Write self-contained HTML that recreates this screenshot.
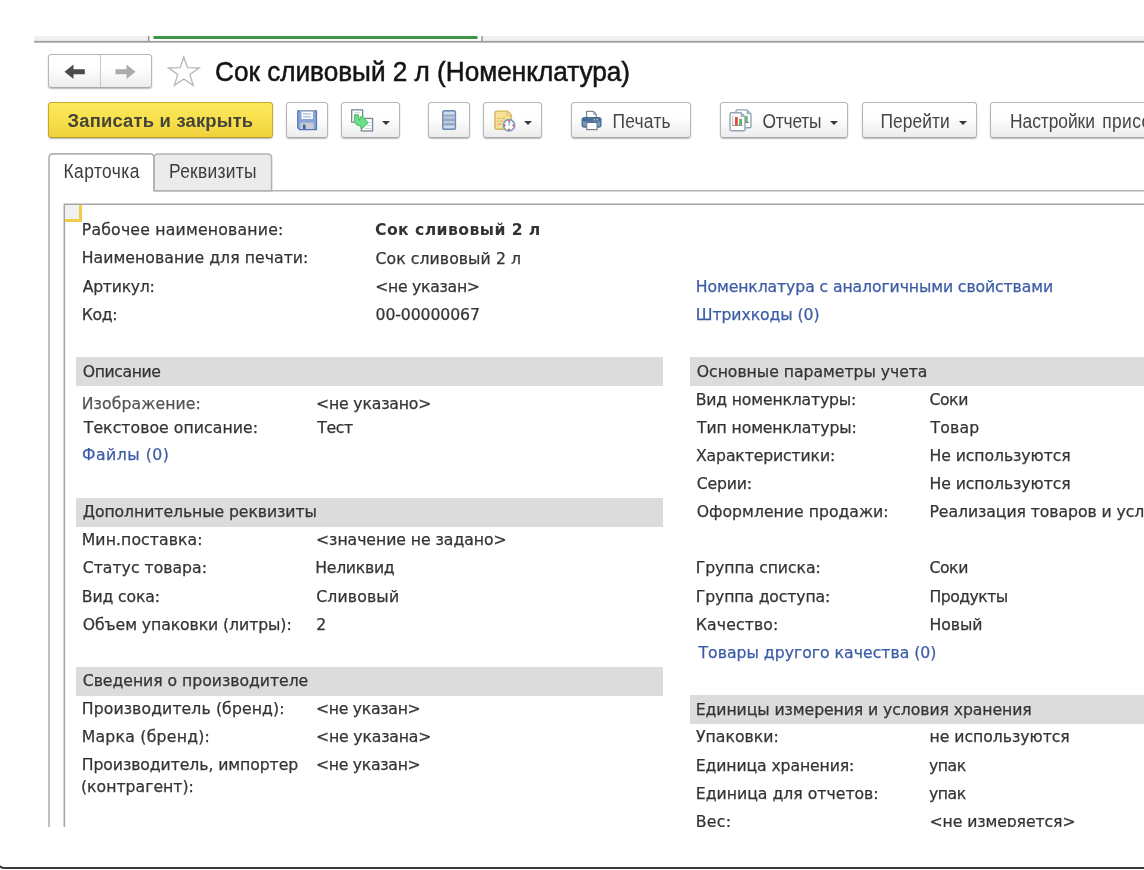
<!DOCTYPE html>
<html lang="ru"><head><meta charset="utf-8"><title>Сок сливовый 2 л (Номенклатура)</title>
<style>
html,body{margin:0;padding:0;background:#fff;}
body{width:1144px;height:870px;position:relative;overflow:hidden;font-family:"Liberation Sans",sans-serif;}
.a{position:absolute;}
.t{position:absolute;white-space:nowrap;font-family:"DejaVu Sans", "Liberation Sans", sans-serif;font-size:15.7px;line-height:20px;height:20px;color:#343434;-webkit-text-stroke:0.25px currentColor;}
.t.b{font-weight:bold;color:#333;-webkit-text-stroke:0;}
.t.l{color:#3c5ca6;}
.t.g{color:#555;}
.band{position:absolute;background:#dcdcdc;}
.u{position:absolute;white-space:nowrap;font-family:"Liberation Sans",sans-serif;}
.btn{position:absolute;box-sizing:border-box;border:1px solid #b6b6b6;border-bottom-color:#a9a9a9;border-radius:3.5px;background:linear-gradient(#ffffff 0%,#ffffff 42%,#ececec 100%);box-shadow:0 1px 1.5px rgba(0,0,0,0.28);font-size:17.5px;color:#444;white-space:nowrap;}
.btn span.lbl{position:absolute;top:0;line-height:34px;}
.caret{position:absolute;width:0;height:0;border-left:4px solid transparent;border-right:4px solid transparent;border-top:4px solid #3a3a3a;}
#clip{position:absolute;left:0;top:0;width:1200px;height:827px;overflow:hidden;filter:blur(0.45px);}
</style></head><body>
<div id="clip">
<svg class="a" style="left:0;top:0;" width="1160" height="870" viewBox="0 0 1160 870">
<rect x="34" y="36" width="1126" height="5.6" fill="#f0f0f0"/>
<rect x="148.7" y="36" width="333.3" height="5.6" fill="#ffffff"/>
<rect x="34" y="40.9" width="1126" height="1.8" fill="#a0a0a0"/>
<rect x="148" y="36" width="1.4" height="5.5" fill="#8e8e8e"/>
<rect x="481.3" y="36" width="1.4" height="5.5" fill="#8e8e8e"/>
<rect x="153.5" y="36" width="324" height="3" fill="#3f9447"/>
<path d="M154 190.8 L154 157.9 Q154 153.9 158 153.9 L267.6 153.9 Q271.6 153.9 271.6 157.9 L271.6 190.8 Z" fill="#ebebeb" stroke="#b2b2b2" stroke-width="1.5"/>
<path d="M154 190.8 L1160 190.8" fill="none" stroke="#b2b2b2" stroke-width="1.5"/>
<path d="M49 900 L49 157.9 Q49 153.9 53 153.9 L150 153.9 Q154 153.9 154 157.9 L154 190.8" fill="none" stroke="#b2b2b2" stroke-width="1.6"/>
<path d="M64.35 900 L64.35 204.2 L1160 204.2" fill="none" stroke="#a4a4a4" stroke-width="1.6"/>
</svg>
<div class="btn" style="left:48px;top:54px;width:104px;height:34px;"></div>
<div class="a" style="left:100px;top:55px;width:1px;height:32px;background:#c8c8c8;"></div>
<svg class="a" style="left:60px;top:60px;" width="84" height="24" viewBox="0 0 84 24">
<path d="M4.5 11.7 L13.5 4.4 L13.5 9.2 L24.8 9.2 L24.8 14.2 L13.5 14.2 L13.5 19 Z" fill="#4a4a4a"/>
<path d="M75.5 11.7 L66.5 4.4 L66.5 9.2 L55.5 9.2 L55.5 14.2 L66.5 14.2 L66.5 19 Z" fill="#ababab"/>
</svg>
<svg class="a" style="left:165px;top:54px;" width="38" height="36" viewBox="0 0 38 36">
<path d="M18.8 3 L22.5 13.6 L34.2 13.8 L24.9 20.6 L28.2 31.4 L18.8 25 L9.4 31.4 L12.7 20.6 L3.4 13.8 L15.1 13.6 Z" fill="#fff" stroke="#b5b5b5" stroke-width="1.3" stroke-linejoin="miter"/>
</svg>
<div class="btn" style="left:48px;top:102px;width:225px;height:36px;border-color:#c6aa2c;border-bottom-color:#b39a2a;background:linear-gradient(#fbe85b 0%,#f8e04c 50%,#efd23c 100%);"></div>
<div class="btn" style="left:286px;top:102px;width:42px;height:36px;"></div>
<div class="btn" style="left:341px;top:102px;width:59px;height:36px;"></div>
<div class="caret" style="left:381.7px;top:120.5px;"></div>
<div class="btn" style="left:428px;top:102px;width:42px;height:36px;"></div>
<div class="btn" style="left:483px;top:102px;width:59px;height:36px;"></div>
<div class="caret" style="left:524px;top:120.5px;"></div>
<div class="btn" style="left:571px;top:102px;width:120px;height:36px;"></div>
<div class="btn" style="left:720px;top:102px;width:128px;height:36px;"></div>
<div class="caret" style="left:830.3px;top:120.5px;"></div>
<div class="btn" style="left:862px;top:102px;width:115px;height:36px;"></div>
<div class="caret" style="left:959px;top:120.5px;"></div>
<div class="btn" style="left:990px;top:102px;width:200px;height:36px;"></div>
<svg class="a" style="left:297px;top:110px;" width="21" height="21" viewBox="0 0 21 21">
<path d="M0.7 1.4 Q0.7 0.6 1.5 0.6 L18.7 0.6 Q19.5 0.6 19.5 1.4 L19.5 19.6 L2.6 19.6 L0.7 17.8 Z" fill="#88a4db" stroke="#5775b7" stroke-width="1.2"/>
<rect x="2.2" y="0.2" width="15.8" height="1.1" fill="#a4adbd"/>
<rect x="4.5" y="1.6" width="11.4" height="7.4" fill="#fdfdfe"/>
<rect x="6" y="3.1" width="8.2" height="1.6" fill="#b8c8dd"/>
<rect x="6" y="6" width="8.2" height="1.6" fill="#b8c8dd"/>
<rect x="3.3" y="12.7" width="13.2" height="6.3" fill="#c8ccd1"/>
<rect x="6" y="14.6" width="2.5" height="4.4" fill="#3f5ca2"/>
</svg>
<svg class="a" style="left:349px;top:108px;" width="27" height="26" viewBox="0 0 27 26">
<rect x="2.65" y="1.85" width="11" height="12.3" fill="#fbfcfd" stroke="#7b8699" stroke-width="1.3"/>
<rect x="5" y="4.3" width="6" height="0.9" fill="#c9ced6"/>
<rect x="12.35" y="10.45" width="11.2" height="12.5" fill="#fbfcfd" stroke="#7b8699" stroke-width="1.3"/>
<rect x="18" y="14.3" width="4" height="0.9" fill="#c9ced6"/><rect x="18" y="17.2" width="4" height="0.9" fill="#c9ced6"/><rect x="16" y="20.1" width="6" height="0.9" fill="#c9ced6"/>
<path d="M5.65 6.85 L9.5 6.85 L10.25 12.55 L12.1 8.3 L13.4 8.1 L19.1 14.75 L12.65 21 L11.7 18.1 L8 17 L5.65 14.4 Z" fill="#6be08c" stroke="#4bb35c" stroke-width="1" stroke-linejoin="round"/>
</svg>
<svg class="a" style="left:442px;top:110.3px;" width="15" height="20" viewBox="0 0 15 20">
<rect x="0.6" y="0.6" width="13" height="18.8" rx="2" fill="#93a9c9" stroke="#7087b4" stroke-width="1.1"/>
<rect x="1.7" y="1.8" width="10.8" height="2.8" fill="#cedcea"/>
<rect x="1.7" y="6.4" width="10.8" height="2.2" fill="#bccbe0"/>
<rect x="1.7" y="11.4" width="10.8" height="1.4" fill="#d0ddee"/>
<rect x="1.7" y="15.6" width="10.8" height="2.6" fill="#cedcea"/>
</svg>
<svg class="a" style="left:493px;top:110px;" width="24" height="23" viewBox="0 0 24 23">
<path d="M3.4 1.1 L14.6 1.1 L18.4 5.4 L18.4 19.2 L3.4 19.2 Q2 19.2 2 17.8 L2 2.5 Q2 1.1 3.4 1.1 Z" fill="#f6e197" stroke="#d3b559" stroke-width="1.4" stroke-linejoin="round"/>
<path d="M14.2 1.4 L14.2 5.8 L18.2 5.8" fill="#fbefc0" stroke="#dcbd68" stroke-width="1.1" stroke-linejoin="round"/>
<path d="M14.6 1.1 L18.4 5.4" stroke="#e6b274" stroke-width="1.2" fill="none"/>
<rect x="4.7" y="7.8" width="2.8" height="1" fill="#e2a362"/><rect x="8.6" y="7.8" width="3.4" height="1" fill="#e2a362"/>
<rect x="4.7" y="10.6" width="1.4" height="1" fill="#e2a362"/><rect x="7.2" y="10.6" width="2.6" height="1" fill="#e2a362"/>
<rect x="4.7" y="13.5" width="3.6" height="1.1" fill="#e2a362"/>
<circle cx="16" cy="15.3" r="5.6" fill="#fdfeff" stroke="#7b9dca" stroke-width="1.7"/>
<rect x="15.1" y="10.3" width="1.8" height="1.5" fill="#e04a40"/><rect x="15.1" y="18.7" width="1.8" height="1.5" fill="#e04a40"/>
<rect x="11" y="14.5" width="1.6" height="1.7" fill="#e04a40"/><rect x="19.5" y="14.5" width="1.6" height="1.7" fill="#e04a40"/>
<path d="M16 15.6 L16 12.6 L17.6 12.6" stroke="#8fb0e2" stroke-width="1.3" fill="none"/>
</svg>
<svg class="a" style="left:581px;top:110px;" width="22" height="21" viewBox="0 0 22 21">
<path d="M5.55 8.4 L5.55 1.45 L12.5 1.45 L15.3 4.6 L15.3 8.4 Z" fill="#fdfdfe" stroke="#7f8c9d" stroke-width="1.3" stroke-linejoin="round"/>
<path d="M12.3 1.6 L12.3 4.8 L15.2 4.8 Z" fill="#8f9bab"/>
<rect x="1.2" y="7.7" width="18.7" height="9.3" rx="2.2" fill="#7d99ba" stroke="#466b95" stroke-width="1.3"/>
<rect x="1.7" y="8.2" width="17.7" height="3.4" rx="1.4" fill="#476c96"/>
<rect x="12.6" y="9.3" width="1.5" height="1" fill="#e3ebf4"/><rect x="15.5" y="9.3" width="1.5" height="1" fill="#e3ebf4"/>
<rect x="5.7" y="12.3" width="10.3" height="7.3" fill="#ffffff" stroke="#738299" stroke-width="1.2"/>
<rect x="5.2" y="11.6" width="11.4" height="1.2" fill="#476c96"/>
</svg>
<svg class="a" style="left:728px;top:108px;" width="26" height="25" viewBox="0 0 26 25">
<path d="M9.4 1.9 L19 1.9 L23 5.9 L23 18.4 Q23 19.8 21.6 19.8 L9.4 19.8 Q8 19.8 8 18.4 L8 3.3 Q8 1.9 9.4 1.9 Z" fill="#fdfdfe" stroke="#95a4b6" stroke-width="1.4" stroke-linejoin="round"/>
<path d="M18.6 2.4 L18.6 6.3 L22.6 6.3 Z" fill="#a3afbf"/>
<rect x="17" y="8.1" width="2.7" height="6" fill="#5cb565"/>
<rect x="17" y="14" width="3.8" height="0.9" fill="#6a6a6a"/>
<path d="M3.4 4.7 L13 4.7 L17 8.7 L17 21.4 Q17 22.8 15.6 22.8 L3.4 22.8 Q2 22.8 2 21.4 L2 6.1 Q2 4.7 3.4 4.7 Z" fill="#fdfdfe" stroke="#95a4b6" stroke-width="1.45" stroke-linejoin="round"/>
<path d="M12.6 5.2 L12.6 9.1 L16.6 9.1 Z" fill="#a3afbf"/>
<rect x="4.3" y="7.5" width="0.9" height="10.2" fill="#b5b5b5"/>
<rect x="7" y="9.1" width="2.8" height="8" fill="#dc4a3e"/>
<rect x="11.1" y="10.9" width="2.9" height="6.2" fill="#5cb565"/>
<rect x="4.3" y="17" width="10.1" height="0.9" fill="#8a8a8a"/>
</svg>
<div class="a" style="left:65px;top:205px;width:13.8px;height:13.9px;background:#f0f0f0;border-right:3.1px solid #f0cc48;border-bottom:3.1px solid #f0cc48;"></div>
<div class="u" id="u0" style="left:215px;top:53.01px;font-size:26.2px;line-height:39px;font-weight:400;color:#141414;letter-spacing:-0.02px;-webkit-text-stroke:0.5px #141414;transform:scaleY(1.09);transform-origin:0 27.99px;">Сок сливовый 2 л (Номенклатура)</div>
<div class="u" id="u1" style="left:67.5px;top:106.91px;font-size:18.4px;line-height:28px;font-weight:700;color:#45443a;letter-spacing:0.2px;transform:scaleY(1.03);transform-origin:0 19.99px;">Записать и закрыть</div>
<div class="u" id="u2" style="left:612.5px;top:108.81px;font-size:17.4px;line-height:26px;font-weight:400;color:#454545;letter-spacing:0.24px;transform:scaleY(1.12);transform-origin:0 18.99px;">Печать</div>
<div class="u" id="u3" style="left:762.5px;top:108.81px;font-size:17.4px;line-height:26px;font-weight:400;color:#454545;letter-spacing:-0.2px;transform:scaleY(1.12);transform-origin:0 18.99px;">Отчеты</div>
<div class="u" id="u4" style="left:880.5px;top:108.81px;font-size:17.4px;line-height:26px;font-weight:400;color:#454545;letter-spacing:0.067px;transform:scaleY(1.12);transform-origin:0 18.99px;">Перейти</div>
<div class="u" id="u5" style="left:1010px;top:108.81px;font-size:17.4px;line-height:26px;font-weight:400;color:#454545;letter-spacing:-0.05px;transform:scaleY(1.12);transform-origin:0 18.99px;">Настройки<span style="margin-left:2.1px;letter-spacing:0.42px"> присоединенных файлов</span></div>
<div class="u" id="u6" style="left:63.5px;top:158.91px;font-size:17.4px;line-height:26px;font-weight:400;color:#3c3c3c;letter-spacing:0.429px;transform:scaleY(1.12);transform-origin:0 18.99px;">Карточка</div>
<div class="u" id="u7" style="left:169px;top:158.91px;font-size:17.4px;line-height:26px;font-weight:400;color:#3c3c3c;letter-spacing:0.3px;transform:scaleY(1.12);transform-origin:0 18.99px;">Реквизиты</div>
<div class="band" style="left:76px;top:357px;width:587px;height:29px;"></div>
<div class="band" style="left:76px;top:498px;width:587px;height:29px;"></div>
<div class="band" style="left:76px;top:667px;width:587px;height:29px;"></div>
<div class="band" style="left:690px;top:357px;width:460px;height:29px;"></div>
<div class="band" style="left:690px;top:695px;width:460px;height:29px;"></div>
<div class="t" id="r0" style="left:81.75px;top:220.41px;letter-spacing:0.2px;">Рабочее наименование:</div>
<div class="t" id="r1" style="left:81.75px;top:248.41px;letter-spacing:0.043px;">Наименование для печати:</div>
<div class="t" id="r2" style="left:82.75px;top:276.66px;letter-spacing:-0.286px;">Артикул:</div>
<div class="t" id="r3" style="left:81.75px;top:304.91px;letter-spacing:-0.333px;">Код:</div>
<div class="t b" id="r4" style="left:375px;top:220.41px;letter-spacing:0.4px;">Сок сливовый 2 л</div>
<div class="t" id="r5" style="left:375.5px;top:248.91px;letter-spacing:0.067px;">Сок сливовый 2 л</div>
<div class="t" id="r6" style="left:375.25px;top:276.66px;letter-spacing:-0.3px;">&lt;не указан&gt;</div>
<div class="t" id="r7" style="left:375.5px;top:304.91px;letter-spacing:-0.1px;">00-00000067</div>
<div class="t" id="r8" style="left:82.75px;top:361.66px;letter-spacing:-0.429px;">Описание</div>
<div class="t g" id="r9" style="left:81.75px;top:394.16px;letter-spacing:0.091px;">Изображение:</div>
<div class="t" id="r10" style="left:83.75px;top:417.91px;letter-spacing:0.056px;">Текстовое описание:</div>
<div class="t l" id="r11" style="left:82px;top:445.41px;letter-spacing:0.5px;">Файлы (0)</div>
<div class="t" id="r12" style="left:316px;top:394.16px;letter-spacing:-0.182px;">&lt;не указано&gt;</div>
<div class="t" id="r13" style="left:317.25px;top:417.91px;letter-spacing:-0.333px;">Тест</div>
<div class="t" id="r14" style="left:82.75px;top:502.41px;letter-spacing:-0.087px;">Дополнительные реквизиты</div>
<div class="t" id="r15" style="left:81.75px;top:530.41px;letter-spacing:0.083px;">Мин.поставка:</div>
<div class="t" id="r16" style="left:82.75px;top:558.41px;">Статус товара:</div>
<div class="t" id="r17" style="left:81.75px;top:586.66px;letter-spacing:-0.125px;">Вид сока:</div>
<div class="t" id="r18" style="left:82.75px;top:614.66px;letter-spacing:-0.091px;">Объем упаковки (литры):</div>
<div class="t" id="r19" style="left:316px;top:530.41px;letter-spacing:-0.053px;">&lt;значение не задано&gt;</div>
<div class="t" id="r20" style="left:315.25px;top:558.41px;letter-spacing:-0.286px;">Неликвид</div>
<div class="t" id="r21" style="left:316.25px;top:586.66px;letter-spacing:0.143px;">Сливовый</div>
<div class="t" id="r22" style="left:316.25px;top:614.66px;">2</div>
<div class="t" id="r23" style="left:82.75px;top:671.16px;letter-spacing:-0.043px;">Сведения о производителе</div>
<div class="t" id="r24" style="left:81.75px;top:699.16px;letter-spacing:0.095px;">Производитель (бренд):</div>
<div class="t" id="r25" style="left:81.75px;top:727.16px;letter-spacing:0.231px;">Марка (бренд):</div>
<div class="t" id="r26" style="left:81.75px;top:755.41px;letter-spacing:-0.091px;">Производитель, импортер</div>
<div class="t" id="r27" style="left:81px;top:777.41px;">(контрагент):</div>
<div class="t" id="r28" style="left:316px;top:699.16px;letter-spacing:-0.3px;">&lt;не указан&gt;</div>
<div class="t" id="r29" style="left:316px;top:727.16px;letter-spacing:-0.182px;">&lt;не указана&gt;</div>
<div class="t" id="r30" style="left:316px;top:755.41px;letter-spacing:-0.3px;">&lt;не указан&gt;</div>
<div class="t l" id="r31" style="left:695.75px;top:276.66px;letter-spacing:-0.114px;">Номенклатура с аналогичными свойствами</div>
<div class="t l" id="r32" style="left:695.75px;top:304.91px;letter-spacing:-0.083px;">Штрихкоды (0)</div>
<div class="t" id="r33" style="left:696.75px;top:361.66px;letter-spacing:-0.043px;">Основные параметры учета</div>
<div class="t" id="r34" style="left:695.75px;top:389.66px;letter-spacing:-0.188px;">Вид номенклатуры:</div>
<div class="t" id="r35" style="left:697px;top:417.91px;letter-spacing:-0.125px;">Тип номенклатуры:</div>
<div class="t" id="r36" style="left:696px;top:445.91px;letter-spacing:-0.143px;">Характеристики:</div>
<div class="t" id="r37" style="left:696.75px;top:474.16px;letter-spacing:-0.2px;">Серии:</div>
<div class="t" id="r38" style="left:696.75px;top:502.16px;">Оформление продажи:</div>
<div class="t" id="r39" style="left:695.75px;top:558.41px;letter-spacing:-0.077px;">Группа списка:</div>
<div class="t" id="r40" style="left:695.75px;top:586.66px;letter-spacing:-0.143px;">Группа доступа:</div>
<div class="t" id="r41" style="left:695.75px;top:614.66px;letter-spacing:0.125px;">Качество:</div>
<div class="t l" id="r42" style="left:698.5px;top:642.91px;">Товары другого качества (0)</div>
<div class="t" id="r43" style="left:695.75px;top:699.66px;letter-spacing:-0.091px;">Единицы измерения и условия хранения</div>
<div class="t" id="r44" style="left:696px;top:727.41px;">Упаковки:</div>
<div class="t" id="r45" style="left:695.75px;top:755.91px;letter-spacing:-0.125px;">Единица хранения:</div>
<div class="t" id="r46" style="left:695.75px;top:784.16px;">Единица для отчетов:</div>
<div class="t" id="r47" style="left:695.75px;top:812.16px;letter-spacing:0.333px;">Вес:</div>
<div class="t" id="r48" style="left:929.5px;top:389.66px;letter-spacing:-0.467px;">Соки</div>
<div class="t" id="r49" style="left:930.5px;top:417.91px;letter-spacing:0.15px;">Товар</div>
<div class="t" id="r50" style="left:929.5px;top:445.91px;letter-spacing:-0.086px;">Не используются</div>
<div class="t" id="r51" style="left:929.5px;top:474.16px;letter-spacing:-0.086px;">Не используются</div>
<div class="t" id="r52" style="left:929.5px;top:502.16px;letter-spacing:-0.086px;">Реализация товаров и услуг</div>
<div class="t" id="r53" style="left:929.5px;top:558.41px;letter-spacing:-0.467px;">Соки</div>
<div class="t" id="r54" style="left:929.5px;top:586.66px;letter-spacing:-0.543px;">Продукты</div>
<div class="t" id="r55" style="left:929.5px;top:614.66px;letter-spacing:-0.05px;">Новый</div>
<div class="t" id="r56" style="left:929.5px;top:727.41px;letter-spacing:-0.043px;">не используются</div>
<div class="t" id="r57" style="left:929px;top:755.91px;letter-spacing:-0.467px;">упак</div>
<div class="t" id="r58" style="left:929px;top:784.16px;letter-spacing:-0.467px;">упак</div>
<div class="t" id="r59" style="left:929.5px;top:812.16px;letter-spacing:-0.1px;">&lt;не измеряется&gt;</div>
</div>
<div class="a" style="left:-3px;top:800px;width:1160px;height:69px;box-sizing:border-box;border:2px solid #3a3a3a;border-top:none;border-radius:0 0 0 7px;"></div>
</body></html>
